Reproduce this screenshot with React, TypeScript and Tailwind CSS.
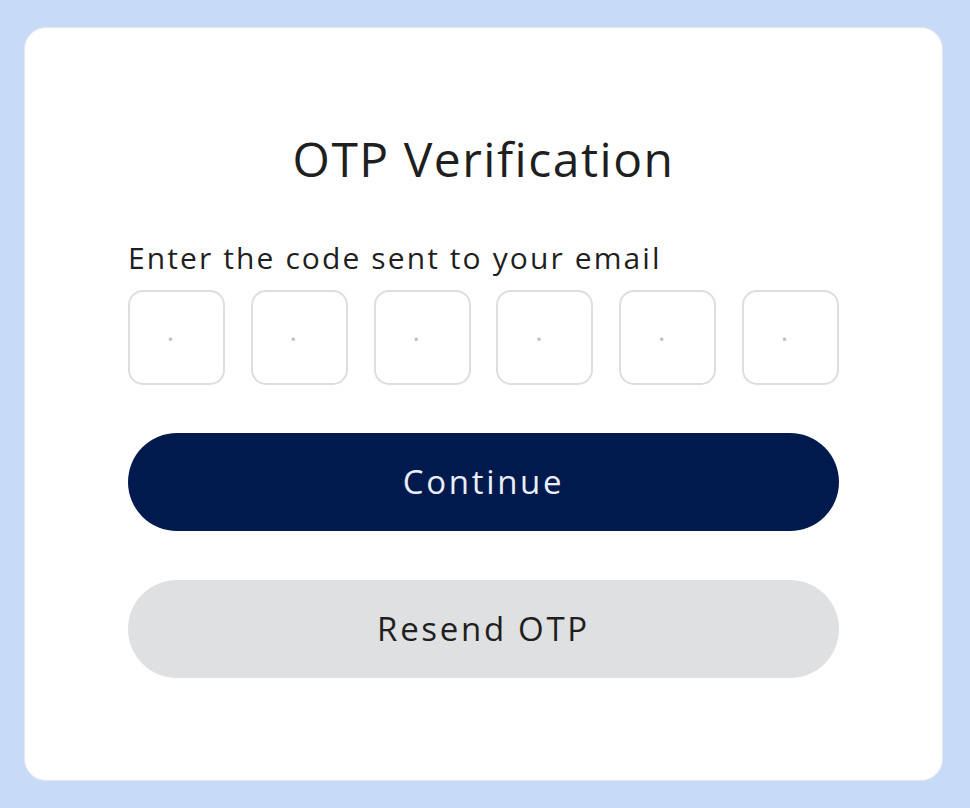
export default function App() {
  const digits = [0, 1, 2, 3, 4, 5];

  return (
    <div
      className="w-full h-[808px] bg-[#c8dbf6] pt-[27px] pb-[27px] pl-[24px] pr-[27px]"
      style={{ fontFamily: '"Open Sans", "Noto Sans", sans-serif' }}
    >
      <div className="h-full bg-white rounded-[22px] border border-[#e4e8ee] px-[103px] pt-[103px]">
        <h1 className="text-center text-[48px] leading-[56px] text-[#1f1f1f] font-normal tracking-[1.5px]">
          OTP Verification
        </h1>

        <p className="mt-[53px] text-[30px] leading-[36px] text-[#1f1f1f] font-normal tracking-[2.1px]">
          Enter the code sent to your email
        </p>

        <div className="mt-[14px] flex justify-between">
          {digits.map((d) => (
            <input
              key={d}
              type="text"
              maxLength={1}
              placeholder="·"
              className="w-[97px] h-[95px] rounded-[15px] border-2 border-[#dedede] pr-[12px] text-center text-[28px] text-[#1f1f1f] placeholder:text-[#bdbdbd] outline-none"
            />
          ))}
        </div>

        <button className="mt-[48px] w-full h-[98px] rounded-full bg-[#001a4e] text-[#e9eef7] text-[33px] font-normal tracking-[2.7px]">
          Continue
        </button>

        <button className="mt-[49px] w-full h-[98px] rounded-full bg-[#dfe0e1] text-[#1f1f1f] text-[33px] font-normal tracking-[2.7px]">
          Resend OTP
        </button>
      </div>
    </div>
  );
}
